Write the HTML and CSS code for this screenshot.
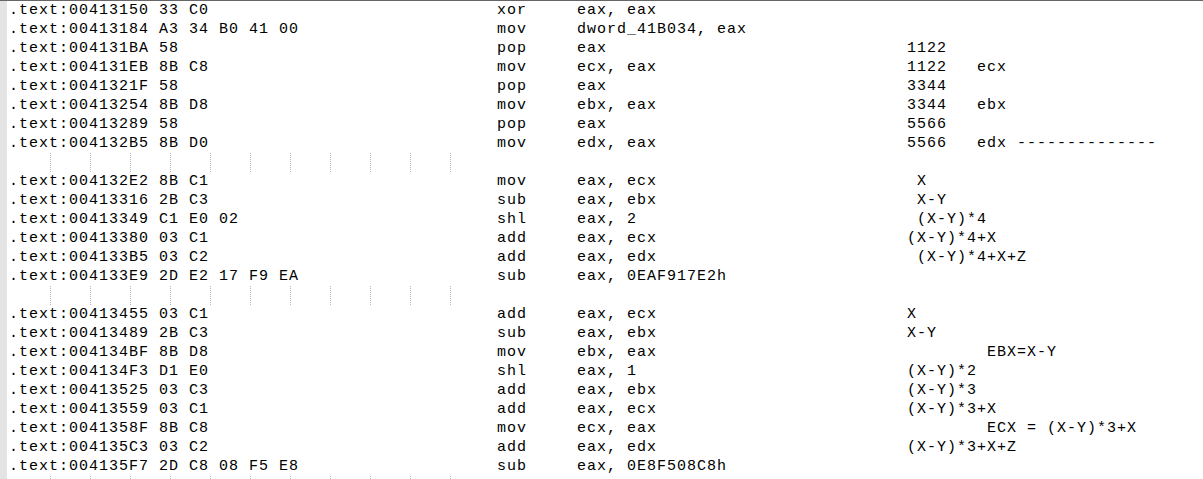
FILE: index.html
```html
<!DOCTYPE html>
<html>
<head>
<meta charset="utf-8">
<link rel="stylesheet" href="styles.css">
</head>
<body>
<div class="editor">
  <div class="gutter"></div>
  <div class="lines">
    <div class="row"><span>.text:00413150 33 C0</span><span>xor</span><span>eax, eax</span><span></span></div>
    <div class="row"><span>.text:00413184 A3 34 B0 41 00</span><span>mov</span><span>dword_41B034, eax</span><span></span></div>
    <div class="row"><span>.text:004131BA 58</span><span>pop</span><span>eax</span><span>1122</span></div>
    <div class="row"><span>.text:004131EB 8B C8</span><span>mov</span><span>ecx, eax</span><span>1122   ecx</span></div>
    <div class="row"><span>.text:0041321F 58</span><span>pop</span><span>eax</span><span>3344</span></div>
    <div class="row"><span>.text:00413254 8B D8</span><span>mov</span><span>ebx, eax</span><span>3344   ebx</span></div>
    <div class="row"><span>.text:00413289 58</span><span>pop</span><span>eax</span><span>5566</span></div>
    <div class="row"><span>.text:004132B5 8B D0</span><span>mov</span><span>edx, eax</span><span>5566   edx --------------</span></div>
    <div class="blank"><i></i><i></i><i></i><i></i><i></i><i></i><i></i><i></i><i></i><i></i><i></i></div>
    <div class="row"><span>.text:004132E2 8B C1</span><span>mov</span><span>eax, ecx</span><span> X</span></div>
    <div class="row"><span>.text:00413316 2B C3</span><span>sub</span><span>eax, ebx</span><span> X-Y</span></div>
    <div class="row"><span>.text:00413349 C1 E0 02</span><span>shl</span><span>eax, 2</span><span> (X-Y)*4</span></div>
    <div class="row"><span>.text:00413380 03 C1</span><span>add</span><span>eax, ecx</span><span>(X-Y)*4+X</span></div>
    <div class="row"><span>.text:004133B5 03 C2</span><span>add</span><span>eax, edx</span><span> (X-Y)*4+X+Z</span></div>
    <div class="row"><span>.text:004133E9 2D E2 17 F9 EA</span><span>sub</span><span>eax, 0EAF917E2h</span><span></span></div>
    <div class="blank"><i></i><i></i><i></i><i></i><i></i><i></i><i></i><i></i><i></i><i></i><i></i></div>
    <div class="row"><span>.text:00413455 03 C1</span><span>add</span><span>eax, ecx</span><span>X</span></div>
    <div class="row"><span>.text:00413489 2B C3</span><span>sub</span><span>eax, ebx</span><span>X-Y</span></div>
    <div class="row"><span>.text:004134BF 8B D8</span><span>mov</span><span>ebx, eax</span><span>        EBX=X-Y</span></div>
    <div class="row"><span>.text:004134F3 D1 E0</span><span>shl</span><span>eax, 1</span><span>(X-Y)*2</span></div>
    <div class="row"><span>.text:00413525 03 C3</span><span>add</span><span>eax, ebx</span><span>(X-Y)*3</span></div>
    <div class="row"><span>.text:00413559 03 C1</span><span>add</span><span>eax, ecx</span><span>(X-Y)*3+X</span></div>
    <div class="row"><span>.text:0041358F 8B C8</span><span>mov</span><span>ecx, eax</span><span>        ECX = (X-Y)*3+X</span></div>
    <div class="row"><span>.text:004135C3 03 C2</span><span>add</span><span>eax, edx</span><span>(X-Y)*3+X+Z</span></div>
    <div class="row"><span>.text:004135F7 2D C8 08 F5 E8</span><span>sub</span><span>eax, 0E8F508C8h</span><span></span></div>
    <div class="blank"><i></i><i></i><i></i><i></i><i></i><i></i><i></i><i></i><i></i><i></i><i></i></div>
  </div>
</div>
</body>
</html>
```
FILE: styles.css
```css
html, body {
  margin: 0;
  padding: 0;
  background: #ffffff;
  overflow: hidden;
}

.editor {
  display: flex;
  border-top: 1px solid #666666;
  height: 478px;
  overflow: hidden;
}

.gutter {
  width: 7px;
  flex: none;
  background: #e4e4e4;
}

.lines {
  flex: 1;
  display: flex;
  flex-direction: column;
}

.row {
  display: grid;
  grid-template-columns: 488px 80px 330px 1fr;
  height: 19px;
  padding-left: 2px;
  font-family: "Liberation Mono", "Courier New", monospace;
  font-size: 15px;
  letter-spacing: 1px;
  line-height: 19px;
  color: #000000;
  white-space: pre;
}

.blank {
  display: flex;
  height: 19px;
  flex: none;
  padding-left: 43px;
  gap: 39px;
}

.blank i {
  display: block;
  width: 0;
  height: 19px;
  border-left: 1px dotted #b8b8b8;
}
```
